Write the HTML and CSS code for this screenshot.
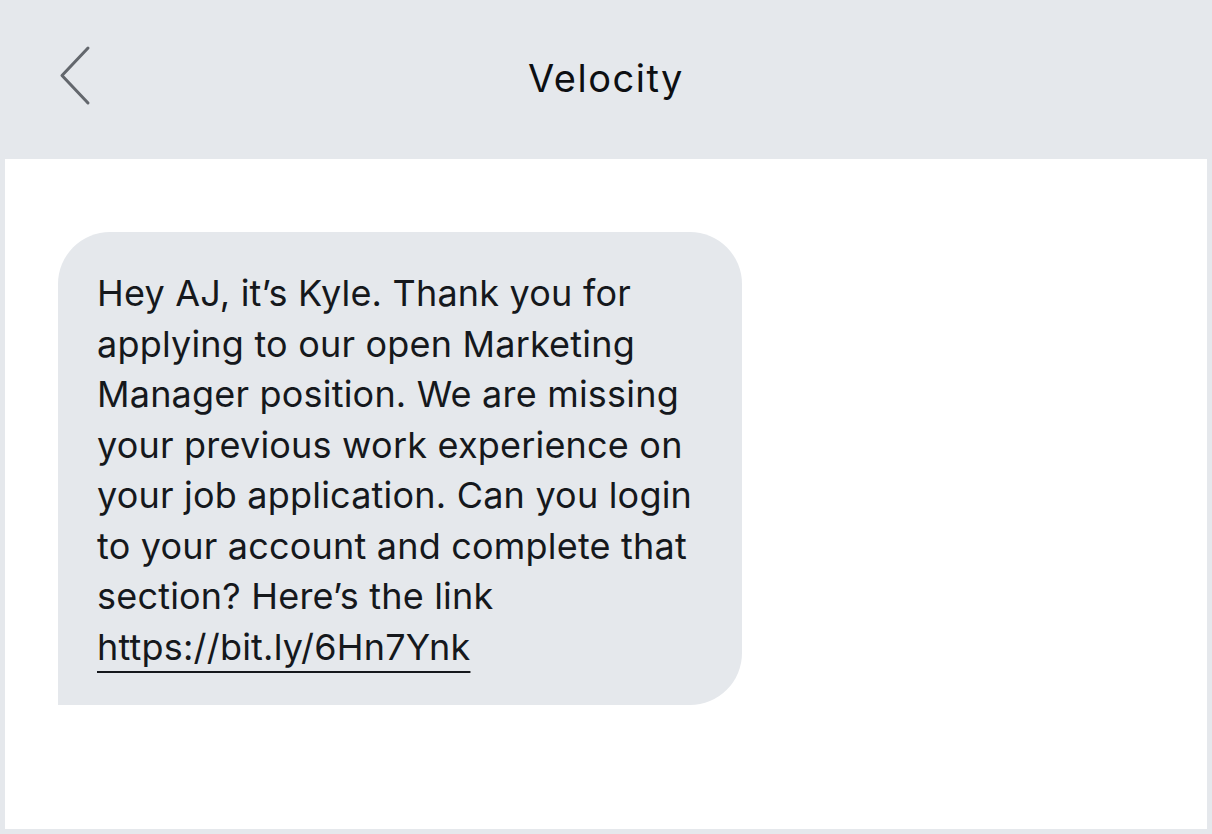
FILE: index.html
```html
<!DOCTYPE html>
<html>
<head>
<meta charset="utf-8">
<link rel="stylesheet" href="styles.css">
</head>
<body>
<div class="screen">
  <header class="topbar">
    <button class="back" aria-label="Back">
      <svg width="34" height="62" viewBox="0 0 34 62"><path d="M30 3 L4 30.5 L30 58" fill="none" stroke="#63676d" stroke-width="3" stroke-linecap="round" stroke-linejoin="round"/></svg>
    </button>
    <h1 class="title">Velocity</h1>
  </header>
  <main class="thread">
    <div class="bubble">
      <p class="msg">Hey AJ, it’s Kyle. Thank you for<br>applying to our open Marketing<br>Manager position. We are missing<br>your previous work experience on<br>your job application. Can you login<br>to your account and complete that<br>section? Here’s the link<br><a class="link" href="#">https://bit.ly/6Hn7Ynk</a></p>
    </div>
  </main>
</div>
</body>
</html>
```
FILE: styles.css
```css
html, body {
  margin: 0;
  padding: 0;
  background: #e5e8ec;
}
.screen {
  width: 1212px;
  height: 834px;
  display: flex;
  flex-direction: column;
  background: #e5e8ec;
  font-family: Inter, "Noto Sans", sans-serif;
}
.topbar {
  height: 159px;
  flex: none;
  display: flex;
  align-items: center;
  justify-content: center;
  position: relative;
}
.back {
  position: absolute;
  left: 58px;
  top: 45px;
  border: 0;
  background: none;
  padding: 0;
  width: 34px;
  height: 62px;
}
.back svg { display: block; }
.title {
  margin: 0;
  font-weight: 400;
  font-size: 38px;
  color: #0d0f12;
  letter-spacing: 1.5px;
  padding-bottom: 4px;
}
.thread {
  flex: 1;
  margin: 0 5px 5px 5px;
  background: #ffffff;
  padding: 73px 0 0 53px;
}
.bubble {
  width: 684px;
  box-sizing: border-box;
  background: #e5e8ec;
  border-radius: 52px 52px 52px 0;
  padding: 36px 20px 33px 39px;
}
.msg {
  margin: 0;
  font-size: 36px;
  line-height: 50.5px;
  letter-spacing: 0.2px;
  color: #15181c;
  white-space: nowrap;
}
.link {
  color: #15181c;
  text-decoration: underline;
  text-decoration-thickness: 2px;
  text-underline-offset: 11px;
}
```
